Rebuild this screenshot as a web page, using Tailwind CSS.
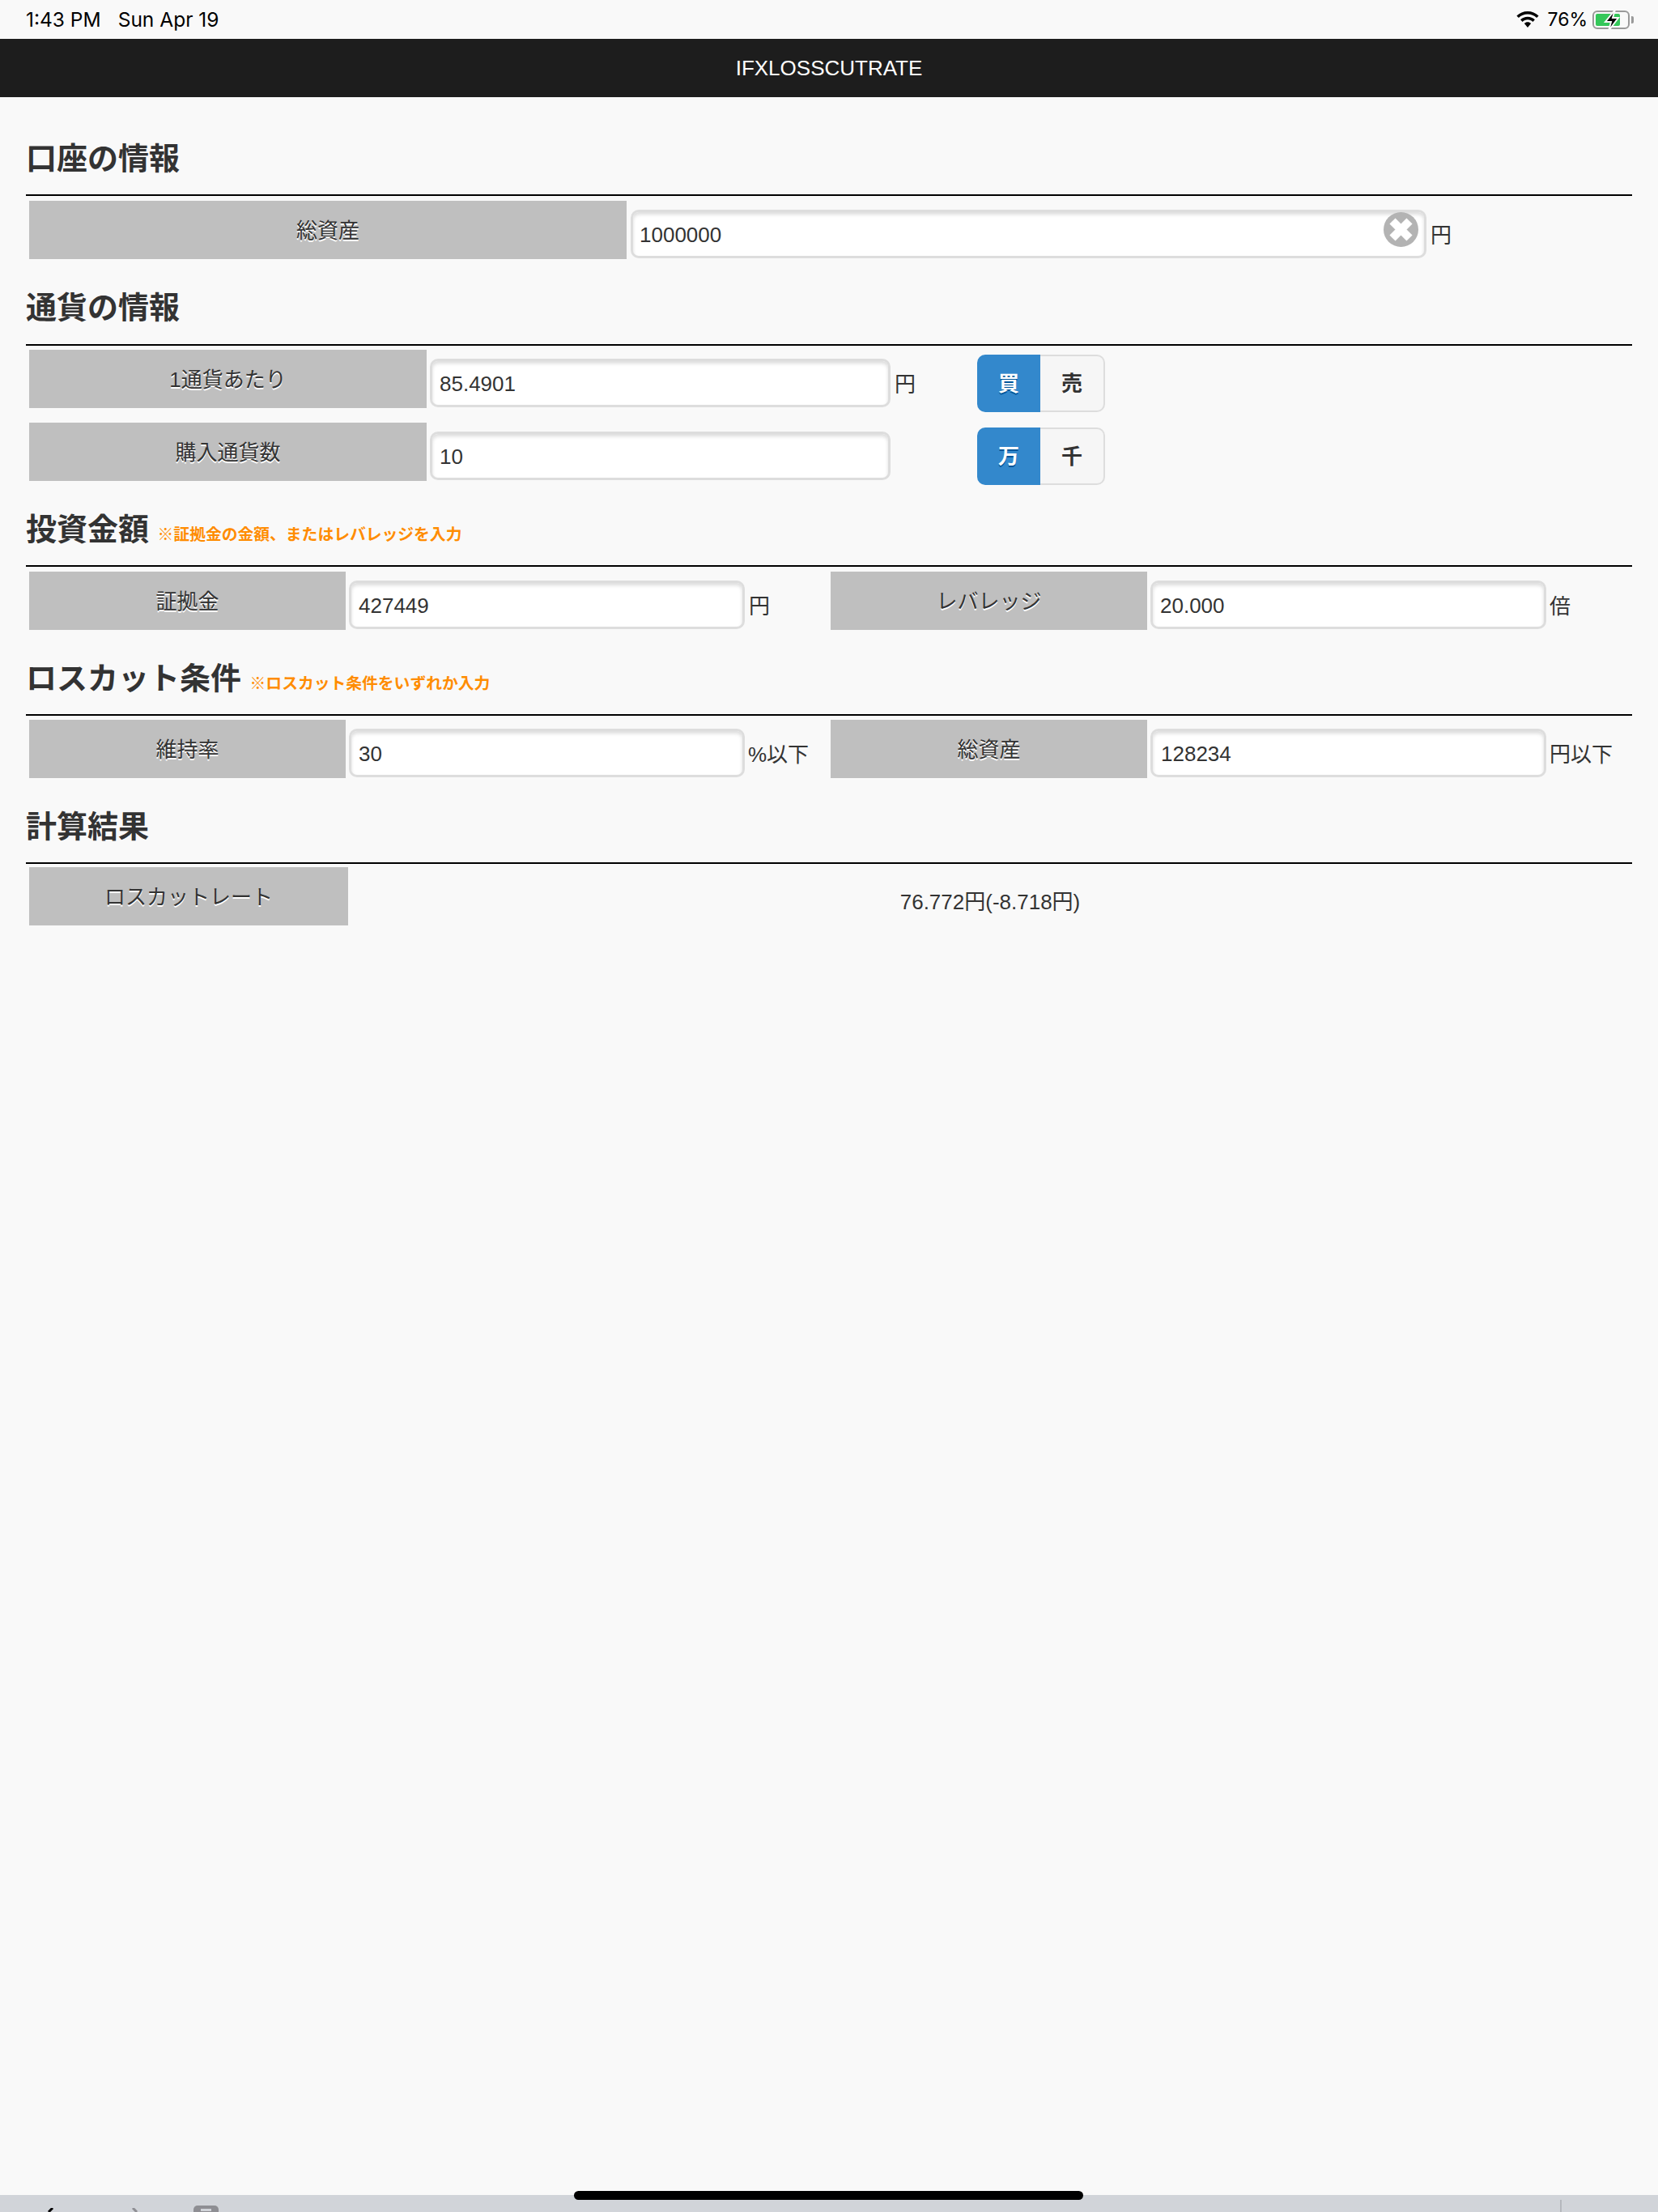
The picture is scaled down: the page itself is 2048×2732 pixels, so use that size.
<!DOCTYPE html>
<html lang="ja">
<head>
    <meta charset="UTF-8">
    <meta name="viewport" content="width=device-width, initial-scale=1.0">
    <title>IFXLOSSCUTRATE</title>
    <script src="https://cdn.jsdelivr.net/npm/@tailwindcss/browser@4"></script>
</head>
<body class="bg-[#f9f9f9] h-[2732px] w-[2048px] overflow-hidden flex flex-col text-[26px] text-[#333] font-['Liberation_Sans','Noto_Sans_CJK_JP',sans-serif]">

    <!-- Status bar -->
    <div class="h-[48px] flex items-center justify-between pl-[32px] pr-[30px] text-black text-[24.500px] font-['Inter','Noto_Sans_CJK_JP',sans-serif]">
        <div class="flex gap-[21px]"><span>1:43 PM</span><span>Sun Apr 19</span></div>
        <div class="flex items-center">
            <svg class="w-[28px] h-[20px] mr-[10px]" viewBox="0 0 28 20">
                <path fill="#000" d="M14 0C8.800 0 4 2 .4 5.500l2.500 2.600C5.800 5.200 9.700 3.600 14 3.600s8.200 1.600 11.100 4.500l2.500-2.600C24 2 19.200 0 14 0z"/>
                <path fill="#000" d="M14 6.700c-3.400 0-6.600 1.300-8.900 3.600l2.500 2.600c1.700-1.600 3.900-2.600 6.400-2.600s4.700 1 6.400 2.600l2.500-2.600c-2.300-2.300-5.500-3.600-8.900-3.600z"/>
                <path fill="#000" d="M14 13.300c-1.600 0-3 .6-4.100 1.600L14 20l4.100-5.100c-1.100-1-2.500-1.600-4.100-1.600z"/>
            </svg>
            <span class="mr-[6px] text-[23px]">76%</span>
            <div class="relative w-[46px] h-[23px] rounded-[6px] border-2 border-[#9a9a9a] p-[2px]">
                <div class="w-[30px] h-full bg-[#34c759] rounded-[2px]"></div>
                <svg class="absolute left-[9px] top-[-4px] w-[26px] h-[28px]" viewBox="0 0 26 28">
                    <path fill="#000" stroke="#f9f9f9" stroke-width="2" d="M17 1 5 16h7l-3 11 12-16h-7z"/>
                </svg>
            </div>
            <div class="w-[3px] h-[9px] ml-[2px] bg-[#9a9a9a] rounded-r-[2px]"></div>
        </div>
    </div>

    <!-- Header -->
    <header class="h-[72px] bg-[#1d1d1d] text-white flex items-center justify-center">IFXLOSSCUTRATE</header>

    <main class="flex-1 px-[32px]">
        <!-- 口座の情報 -->
        <h2 class="mt-[51px] h-[71px] pt-[2px] border-b-2 border-black text-[38px] leading-[46px] font-bold">口座の情報</h2>
        <div class="mt-[6px] pl-[4px] flex h-[72px]">
            <div class="w-[738px] pt-[2px] bg-[#bfbfbf] flex items-center justify-center [text-shadow:0_2px_0_#fff]">総資産</div>
            <div class="relative ml-[5px] mt-[11px] w-[983px]">
                <input type="text" value="1000000" class="w-full h-[60px] bg-white rounded-[10px] border-[3px] border-[#ddd] px-[8px] pt-[2px] shadow-[inset_0_3px_4px_#ddd] outline-none">
                <svg class="absolute right-[10px] top-[3px] w-[43px] h-[43px]" viewBox="0 0 43 43">
                    <circle cx="21.500" cy="21.500" r="21.500" fill="#b3b3b3"/>
                    <path stroke="#fff" stroke-width="10" d="M11 11 32 32M32 11 11 32"/>
                </svg>
            </div>
            <span class="ml-[5px] mt-[13px] leading-[60px]">円</span>
        </div>

        <!-- 通貨の情報 -->
        <h2 class="mt-[36px] h-[71px] pt-[1px] border-b-2 border-black text-[38px] leading-[46px] font-bold">通貨の情報</h2>
        <div class="mt-[5px] pl-[4px] flex h-[72px]">
            <div class="w-[491px] pt-[2px] bg-[#bfbfbf] flex items-center justify-center [text-shadow:0_2px_0_#fff]">1通貨あたり</div>
            <input type="text" value="85.4901" class="ml-[4px] mt-[11px] w-[569px] h-[60px] bg-white rounded-[10px] border-[3px] border-[#ddd] px-[9px] pt-[2px] shadow-[inset_0_3px_4px_#ddd] outline-none">
            <span class="ml-[5px] mt-[13px] w-[102px] leading-[60px]">円</span>
            <div class="mt-[6px] flex h-[71px] font-bold">
                <div class="w-[78px] pt-[2px] bg-[#3388cc] text-white rounded-l-[10px] flex items-center justify-center [text-shadow:0_2px_0_#005599]">買</div>
                <div class="w-[80px] pt-[2px] bg-[#f6f6f6] border-2 border-l-0 border-[#ddd] rounded-r-[10px] flex items-center justify-center [text-shadow:0_2px_0_#fff]">売</div>
            </div>
        </div>
        <div class="mt-[18px] pl-[4px] flex h-[72px]">
            <div class="w-[491px] pt-[2px] bg-[#bfbfbf] flex items-center justify-center [text-shadow:0_2px_0_#fff]">購入通貨数</div>
            <input type="text" value="10" class="ml-[4px] mt-[11px] w-[569px] h-[60px] bg-white rounded-[10px] border-[3px] border-[#ddd] px-[9px] pt-[2px] shadow-[inset_0_3px_4px_#ddd] outline-none">
            <span class="ml-[7px] mt-[11px] w-[100px] leading-[60px]"></span>
            <div class="mt-[6px] flex h-[71px] font-bold">
                <div class="w-[78px] pt-[2px] bg-[#3388cc] text-white rounded-l-[10px] flex items-center justify-center [text-shadow:0_2px_0_#005599]">万</div>
                <div class="w-[80px] pt-[2px] bg-[#f6f6f6] border-2 border-l-0 border-[#ddd] rounded-r-[10px] flex items-center justify-center [text-shadow:0_2px_0_#fff]">千</div>
            </div>
        </div>

        <!-- 投資金額 -->
        <h2 class="mt-[35px] h-[71px] pt-[2px] border-b-2 border-black text-[38px] leading-[46px] font-bold">投資金額 <span class="text-[19.800px] text-[#ff8c00]">※証拠金の金額、またはレバレッジを入力</span></h2>
        <div class="mt-[6px] pl-[4px] flex h-[72px]">
            <div class="w-[391px] pt-[2px] bg-[#bfbfbf] flex items-center justify-center [text-shadow:0_2px_0_#fff]">証拠金</div>
            <input type="text" value="427449" class="ml-[4px] mt-[11px] w-[489px] h-[60px] bg-white rounded-[10px] border-[3px] border-[#ddd] px-[9px] pt-[2px] shadow-[inset_0_3px_4px_#ddd] outline-none">
            <span class="ml-[5px] mt-[13px] w-[101px] leading-[60px]">円</span>
            <div class="w-[391px] pt-[2px] bg-[#bfbfbf] flex items-center justify-center [text-shadow:0_2px_0_#fff]">レバレッジ</div>
            <input type="text" value="20.000" class="ml-[4px] mt-[11px] w-[489px] h-[60px] bg-white rounded-[10px] border-[3px] border-[#ddd] px-[9px] pt-[2px] shadow-[inset_0_3px_4px_#ddd] outline-none">
            <span class="ml-[4px] mt-[13px] leading-[60px]">倍</span>
        </div>

        <!-- ロスカット条件 -->
        <h2 class="mt-[35px] h-[71px] pt-[2px] border-b-2 border-black text-[38px] leading-[46px] font-bold">ロスカット条件 <span class="text-[19.800px] text-[#ff8c00]">※ロスカット条件をいずれか入力</span></h2>
        <div class="mt-[5px] pl-[4px] flex h-[72px]">
            <div class="w-[391px] pt-[2px] bg-[#bfbfbf] flex items-center justify-center [text-shadow:0_2px_0_#fff]">維持率</div>
            <input type="text" value="30" class="ml-[4px] mt-[11px] w-[489px] h-[60px] bg-white rounded-[10px] border-[3px] border-[#ddd] px-[9px] pt-[2px] shadow-[inset_0_3px_4px_#ddd] outline-none">
            <span class="ml-[4px] mt-[13px] w-[102px] leading-[60px]">%以下</span>
            <div class="w-[391px] pt-[2px] bg-[#bfbfbf] flex items-center justify-center [text-shadow:0_2px_0_#fff]">総資産</div>
            <input type="text" value="128234" class="ml-[4px] mt-[11px] w-[489px] h-[60px] bg-white rounded-[10px] border-[3px] border-[#ddd] px-[10px] pt-[2px] shadow-[inset_0_3px_4px_#ddd] outline-none">
            <span class="ml-[4px] mt-[13px] leading-[60px]">円以下</span>
        </div>

        <!-- 計算結果 -->
        <h2 class="mt-[35px] h-[71px] pt-[2px] border-b-2 border-black text-[38px] leading-[46px] font-bold">計算結果</h2>
        <div class="mt-[4px] pl-[4px] flex h-[72px]">
            <div class="w-[394px] pt-[2px] bg-[#bfbfbf] flex items-center justify-center [text-shadow:0_2px_0_#fff]">ロスカットレート</div>
            <div class="flex-1 text-center pt-[28px] leading-[30px]">76.772円(-8.718円)</div>
        </div>
    </main>

    <!-- Keyboard toolbar, clipped by the bottom of the screen -->
    <div class="relative h-[21px] bg-[#d1d4d9] overflow-visible">
        <div class="absolute left-[709px] top-[-5px] w-[629px] h-[11px] bg-black rounded-full"></div>
        <div class="absolute left-[1927px] top-[6px] w-[2px] h-[15px] bg-[#b5b8bd]"></div>
        <svg class="absolute left-[58px] top-[16px] w-[10px] h-[5px]" viewBox="0 0 10 5"><path stroke="#000" stroke-width="3" fill="none" d="M7 0 2 5"/></svg>
        <svg class="absolute left-[161px] top-[16px] w-[10px] h-[5px]" viewBox="0 0 10 5"><path stroke="#8e8e93" stroke-width="3" fill="none" d="M3 0 8 5"/></svg>
        <div class="absolute left-[239px] top-[13px] w-[31px] h-[8px] bg-[#8e8e93] rounded-t-[5px] pt-[4px] flex justify-center">
            <div class="w-[13px] h-[3px] bg-[#d1d4d9]"></div>
        </div>
    </div>

</body>
</html>
